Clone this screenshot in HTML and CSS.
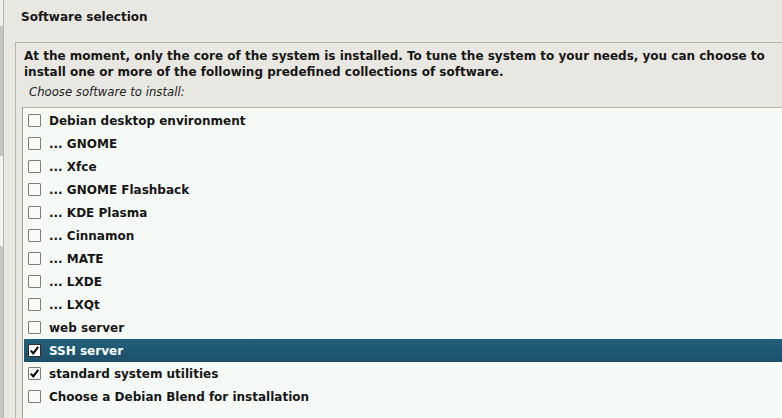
FILE: index.html
```html
<!DOCTYPE html>
<html>
<head>
<meta charset="utf-8">
<link rel="stylesheet" href="styles.css">
</head>
<body>
<div class="strip">
  <div class="s1"></div><div class="s2"></div><div class="s3"></div><div class="s4"></div>
</div>
<div class="dialog">
  <div class="title">Software selection</div>
  <div class="frame">
    <p class="intro">At the moment, only the core of the system is installed. To tune the system to your needs, you can choose to install one or more of the following predefined collections of software.</p>
    <p class="choose">Choose software to install:</p>
    <div class="list">
      <div class="row"><span class="box"></span><span class="label">Debian desktop environment</span></div>
      <div class="row"><span class="box"></span><span class="label">... GNOME</span></div>
      <div class="row"><span class="box"></span><span class="label">... Xfce</span></div>
      <div class="row"><span class="box"></span><span class="label">... GNOME Flashback</span></div>
      <div class="row"><span class="box"></span><span class="label">... KDE Plasma</span></div>
      <div class="row"><span class="box"></span><span class="label">... Cinnamon</span></div>
      <div class="row"><span class="box"></span><span class="label">... MATE</span></div>
      <div class="row"><span class="box"></span><span class="label">... LXDE</span></div>
      <div class="row"><span class="box"></span><span class="label">... LXQt</span></div>
      <div class="row"><span class="box"></span><span class="label">web server</span></div>
      <div class="row selected"><span class="box"><svg viewBox="0 0 11 11" width="11" height="11"><path d="M1.8 5.6 L4.3 8.4 L9.2 1.8" fill="none" stroke="#000" stroke-width="2"/></svg></span><span class="label">SSH server</span></div>
      <div class="row"><span class="box"><svg viewBox="0 0 11 11" width="11" height="11"><path d="M1.8 5.6 L4.3 8.4 L9.2 1.8" fill="none" stroke="#000" stroke-width="2"/></svg></span><span class="label">standard system utilities</span></div>
      <div class="row"><span class="box"></span><span class="label">Choose a Debian Blend for installation</span></div>
      <div class="row"></div>
    </div>
  </div>
</div>
</body>
</html>
```
FILE: styles.css
```css
html, body {
  margin: 0;
  padding: 0;
  height: 100%;
}
body {
  display: flex;
  background: #e8e7e1;
  overflow: hidden;
  font-family: "DejaVu Sans", sans-serif;
  color: #161616;
}
.strip {
  width: 3px;
  flex: none;
  display: flex;
  flex-direction: column;
  background: #c3c1bb;
  border-right: 1px solid #b8b6b0;
}
.s1 { height: 26px; background: #eeeeec; }
.s2 { height: 130px; background: #c6c4be; }
.s3 { height: 90px; background: #f3f3f1; }
.s4 { flex: 1; background: #c9c7c1; }
.dialog {
  flex: 1;
  display: flex;
  flex-direction: column;
  min-width: 0;
}
.title {
  flex: none;
  font-weight: bold;
  font-size: 12px;
  line-height: 16px;
  padding: 9px 0 0 17px;
  height: 42px;
  box-sizing: border-box;
}
.frame {
  flex: none;
  margin-left: 11px;
  border-top: 1px solid #bbb5a9;
  border-left: 1px solid #bbb5a9;
  padding: 5px 0 0 6px;
  display: flex;
  flex-direction: column;
}
.intro {
  flex: none;
  margin: 0;
  padding-left: 2px;
  font-weight: bold;
  font-size: 12px;
  line-height: 16px;
  width: 750px;
}
.choose {
  flex: none;
  margin: 4px 0 0 0;
  padding-left: 7px;
  font-style: italic;
  font-size: 11.7px;
  line-height: 16px;
  color: #1c1c1c;
}
.list {
  flex: none;
  margin-top: 7px;
  border-top: 1px solid #bbb5a9;
  border-left: 1px solid #a49d90;
  background: #f6faf7;
  padding: 1px 0 0 1px;
}
.row {
  height: 23px;
  display: flex;
  align-items: center;
  padding-left: 4px;
  font-weight: bold;
  font-size: 12px;
}
.box {
  width: 11px;
  height: 11px;
  border: 1px solid #857b70;
  border-radius: 1px;
  background: #f9fbf9;
  margin-right: 8px;
  flex: none;
  display: flex;
}
.selected {
  background: linear-gradient(#22607b, #1e4f68);
  color: #ffffff;
}
.selected .box {
  background: #ffffff;
  border-color: #2a2a2a;
}
.label {
  white-space: nowrap;
}
```
